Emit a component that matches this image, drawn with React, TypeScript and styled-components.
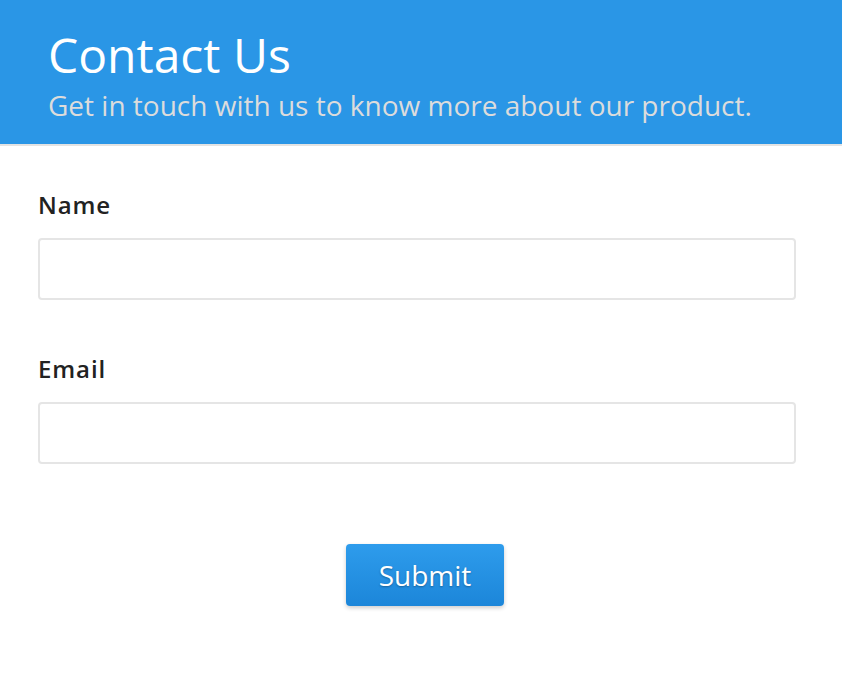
import React from 'react';
import styled, { createGlobalStyle } from 'styled-components';

const GlobalStyle = createGlobalStyle`
  html, body {
    margin: 0;
    padding: 0;
    background: #ffffff;
    font-family: 'Open Sans', 'Noto Sans', sans-serif;
  }
`;

const App = () => (
  <React.Fragment>
    <GlobalStyle />
    <Page>
      <Header>
        <Title>Contact Us</Title>
        <Subtitle>Get in touch with us to know more about our product.</Subtitle>
      </Header>
      <Form onSubmit={(e) => e.preventDefault()}>
        <Field>
          <Label htmlFor="name">Name</Label>
          <Input id="name" type="text" />
        </Field>
        <Field>
          <Label htmlFor="email">Email</Label>
          <Input id="email" type="email" />
        </Field>
        <Actions>
          <SubmitButton type="submit">Submit</SubmitButton>
        </Actions>
      </Form>
    </Page>
  </React.Fragment>
);

export default App;

const Page = styled('div')`
  width: 842px;
  min-height: 682px;
  background: #ffffff;
`;

const Header = styled('header')`
  background: #2a96e6;
  border-bottom: 2px solid #e3e3e3;
  height: 146px;
  box-sizing: border-box;
  padding: 24px 48px 0 48px;
`;

const Title = styled('h1')`
  margin: 0;
  font-size: 48px;
  font-weight: 400;
  line-height: 62px;
  color: #ffffff;
`;

const Subtitle = styled('p')`
  margin: 0;
  font-size: 28px;
  font-weight: 400;
  line-height: 38px;
  color: #dcdcdc;
`;

const Form = styled('form')`
  display: flex;
  flex-direction: column;
  padding: 43px 46px 0 38px;
`;

const Field = styled('div')`
  display: flex;
  flex-direction: column;
  gap: 17px;
  margin-bottom: 53px;
`;

const Label = styled('label')`
  font-size: 24px;
  font-weight: 600;
  line-height: 32px;
  letter-spacing: 0.9px;
  color: #222222;
`;

const Input = styled('input')`
  box-sizing: border-box;
  width: 758px;
  height: 62px;
  border: 2px solid #e5e5e5;
  border-radius: 4px;
  background: #ffffff;
  outline: none;
  font-family: inherit;
  font-size: 20px;
  padding: 0 14px;
`;

const Actions = styled('div')`
  display: flex;
  justify-content: center;
  padding: 27px 0 0 16px;
`;

const SubmitButton = styled('button')`
  width: 158px;
  height: 62px;
  border: none;
  border-radius: 4px;
  background: linear-gradient(#2e9cec, #1c86d9);
  box-shadow: 0 2px 4px rgba(0, 0, 0, 0.2);
  color: #ffffff;
  font-family: 'Open Sans', sans-serif;
  font-size: 28px;
  font-weight: 400;
  text-shadow: 0 1px 2px rgba(0, 0, 0, 0.3);
  cursor: pointer;
`;
